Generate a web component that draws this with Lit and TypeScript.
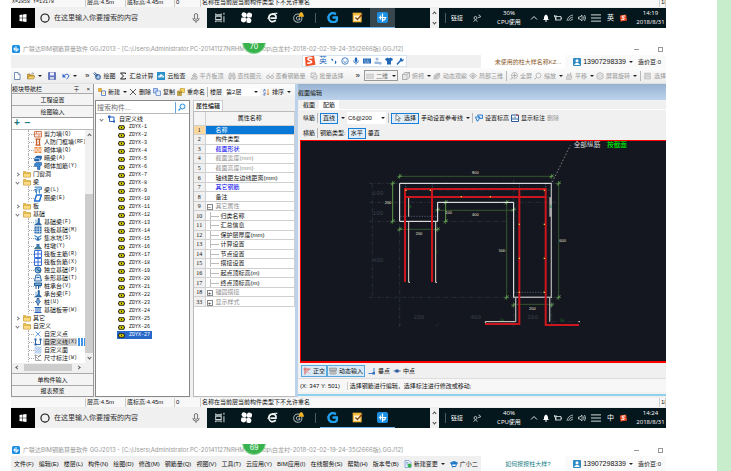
import { LitElement, html, css, svg, nothing } from "lit";
import { customElement, property } from "lit/decorators.js";
import { classMap } from "lit/directives/class-map.js";

const shapes: Record<string, unknown> = {
  app: svg`<rect width="16" height="16" rx="3" fill="#1b8fe3"/><path d="M8 2v12M2.500 8h11M5 5v6M8 11q4 2 4-3" fill="none" stroke="#fff" stroke-width="1.800"/>`,
  page: svg`<path d="M3 1h7l4 4v10H3z" fill="#fff" stroke="#4a6b9b" stroke-width="1.500"/><path d="M10 1v4h4" fill="none" stroke="#4a6b9b"/>`,
  open: svg`<path d="M1 14V4h5l1 2h6v3" fill="#d7a53d" stroke="#8e6a1c"/><path d="M1 14l3-6h12l-3 6z" fill="#f7cf6b" stroke="#8e6a1c"/><path d="M9 3q3-3 5 1" fill="none" stroke="#333"/>`,
  save: svg`<path d="M1 1h14v14H1z" fill="#5b74c4" stroke="#2d3f86"/><path d="M4 1h8v6H4z" fill="#eef"/><path d="M4 10h8v5H4z" fill="#cdd3ea"/>`,
  undo: svg`<path d="M4 7q7-6 10 0 0 4-5 7" fill="none" stroke="#3564c8" stroke-width="2"/><path d="M1 3v8h7z" fill="#3564c8"/>`,
  draw: svg`<circle cx="10" cy="10" r="5" fill="#8fb3dd" stroke="#24508c" stroke-width="1.500"/><path d="M1 3l8 7M3 1l7 6" stroke="#24508c" stroke-width="2"/><circle cx="10" cy="10" r="1.500" fill="#fff"/>`,
  sum: svg`<path d="M13 4V2H3l6 6-6 6h10v-2" fill="none" stroke="#222" stroke-width="2"/>`,
  cloud: svg`<rect width="16" height="16" fill="#2b8fc9"/><path d="M3 11q-2-4 2-4 3-5 7 0 4 1 1 4z" fill="#fff"/><path d="M6 9l2 2 4-4" stroke="#2b8fc9" fill="none" stroke-width="1.500"/>`,
  align: svg`<path d="M2 14h12V9H7zM5 8l4-6 4 4z" fill="#ddd" stroke="#aaa" stroke-width="1.500"/>`,
  find: svg`<path d="M2 14V7l2-5h2v12zM14 14V7l-2-5h-2v12zM6 7h4" fill="#e2e2e2" stroke="#aaa" stroke-width="1.500"/>`,
  glasses: svg`<circle cx="4" cy="10" r="3" fill="none" stroke="#aaa" stroke-width="1.500"/><circle cx="12" cy="10" r="3" fill="none" stroke="#aaa" stroke-width="1.500"/><path d="M7 10h2M13 7l2-5M4 7l3-4" stroke="#aaa" fill="none"/>`,
  batch: svg`<path d="M2 2h9v9H2z" fill="#eee" stroke="#aaa" stroke-width="1.500"/><path d="M6 6h8v8H6zM6 9h8M6 12h8" fill="#f6f6f6" stroke="#aaa"/>`,
  flat: svg`<path d="M1 4h14v9H1z" fill="#d8d8d8" stroke="#bbb"/>`,
  cube: svg`<path d="M1 5l5-4h9v9l-5 5H1z" fill="#e6e6e6" stroke="#999" stroke-width="1.500"/><path d="M1 5h9v10M10 5l5-4" fill="none" stroke="#999"/>`,
  orbit: svg`<path d="M3 6l6-4 5 3-2 7-6 3-4-3z" fill="#d0d0d0" stroke="#aaa"/><path d="M1 14L14 2" stroke="#999" stroke-width="1.500"/>`,
  local: svg`<path d="M8 2l7 5-7 7-7-7z" fill="#e8e8e8" stroke="#aaa" stroke-width="1.500"/><circle cx="8" cy="8" r="3" fill="#bbb"/>`,
  full: svg`<circle cx="9" cy="7" r="6" fill="none" stroke="#aaa" stroke-width="1.500"/><path d="M9 3v8M5 7h8M1 15l4-4" stroke="#999" stroke-width="1.500"/>`,
  lens: svg`<circle cx="9" cy="7" r="5" fill="#f4f4f4" stroke="#aaa" stroke-width="1.500"/><path d="M1 15l4-4" stroke="#aaa" stroke-width="2"/>`,
  pan: svg`<path d="M3 15V9l2-1V4h2v3h3V2h2v6h2l-2 7z" fill="#d5d5d5" stroke="#aaa"/>`,
  spin: svg`<path d="M8 1l6 3v8l-6 3-6-3V4z" fill="#f0f0f0" stroke="#aaa" stroke-width="1.500"/><circle cx="8" cy="8" r="3" fill="none" stroke="#aaa"/>`,
  pick: svg`<path d="M3 2h10v4H3zM3 8h10v6H3zM1 1v14" fill="#ddd" stroke="#aaa"/>`,
  newItem: svg`<path d="M7 6h8v9H7z" fill="#fff" stroke="#3666b8" stroke-width="1.500"/><path d="M1 1h6v6H1z" fill="#f0b82e" stroke="#b07a10"/><path d="M9 9h4v3H9z" fill="#ffd968"/>`,
  cross: svg`<path d="M2 2l12 12M14 2L2 14" stroke="#444" stroke-width="1.800"/>`,
  copy: svg`<path d="M1 1h8v9H1z" fill="#bcd2f2" stroke="#3666b8" stroke-width="1.200"/><path d="M6 6h9v9H6z" fill="#e4eefc" stroke="#3666b8" stroke-width="1.200"/>`,
  rename: svg`<path d="M6 1h9v8H6z" fill="#f6d25c" stroke="#a8851d"/><path d="M1 6h8v9H1z" fill="#e8b93a" stroke="#8e6a1c"/><path d="M3 9h4M3 12h4" stroke="#455" stroke-width="1.500"/>`,
  sort: svg`<path d="M3 7l2-5 2 5M3 10h4l-4 4h4" fill="none" stroke="#3666b8" stroke-width="1.500"/><path d="M12 2v11M10 11l2 3 2-3" fill="none" stroke="#d07a20" stroke-width="1.500"/>`,
  wall: svg`<path d="M1 3h14v11H1z" fill="#fbe7dd" stroke="#c55a28" stroke-width="1.500"/><path d="M1 8h14M5 3v5M10 8v6" stroke="#c55a28"/>`,
  door: svg`<path d="M3 2h10M3 14h10M5 2v12M11 2v12" stroke="#c05a20" stroke-width="2.500"/><path d="M5 8h6" stroke="#e0a080" stroke-width="2"/>`,
  brick: svg`<path d="M1 2h14v12H1z" fill="#f4883e"/><path d="M1 6h14M1 10h14M8 2v4M4 6v4M12 6v4M8 10v4" stroke="#fff" stroke-width="1.500"/>`,
  beam: svg`<path d="M1 9l4-5h10v5l-4 5H1z" fill="#2b6cb8" stroke="#17457e"/><path d="M1 9h10v5" fill="none" stroke="#fff"/>`,
  tee: svg`<path d="M1 4l3-3h11v5l-3 3v6H7V9H1z" fill="#3a86cc" stroke="#17458e"/>`,
  ring: svg`<path d="M5 2h10l-4 12H1z" fill="none" stroke="#1f6fd0" stroke-width="3"/>`,
  pipe: svg`<path d="M1 2h14v5h-4v8M5 15V7H1z" fill="#9cc8ee" stroke="#2c6fae" stroke-width="1.500"/>`,
  foot: svg`<path d="M8 1h3v8l4 5H1l7-5z" fill="#2e74b5" stroke="#184a80"/><path d="M4 3v8" stroke="#6fa7dc" stroke-width="2"/>`,
  raft: svg`<path d="M1 1h14v14H1z" fill="#2f6fb0"/><path d="M1 6h14M1 11h14M6 1v14M11 1v14" stroke="#dbe9f8" stroke-width="1.300"/>`,
  sump: svg`<path d="M1 3l7 4 7-4M2 8q6 9 12 0" fill="none" stroke="#3a86cc" stroke-width="2.500"/><circle cx="8" cy="10" r="2" fill="#17458e"/>`,
  pier: svg`<path d="M1 14l3-4h8l3 4z" fill="#49a" stroke="#234"/><path d="M5 4h6v6H5z" fill="#3d77b0"/>`,
  mesh: svg`<path d="M1 1h14v14H1z" fill="#fff" stroke="#2560d8" stroke-width="1.800"/><path d="M8 1v14M1 8h14" stroke="#2560d8" stroke-width="1.800"/>`,
  solo: svg`<circle cx="8" cy="8" r="6" fill="#8dbbe2" stroke="#1d5a96" stroke-width="1.800"/><path d="M2 3l11 10M8 2v7h6" stroke="#1d5a96" stroke-width="1.500" fill="none"/>`,
  strip: svg`<path d="M4 2h8l3 12H1zM5 7h6" fill="#dbe9f8" stroke="#2d6ca8" stroke-width="2"/>`,
  cap: svg`<path d="M1 2h14v5H1zM4 7v7M9 7v7M12 7v4" fill="#74a9da" stroke="#1d5a96" stroke-width="2"/>`,
  pile: svg`<path d="M6 1h4v4l3 2-3 3-2 5-2-5-3-3 3-2z" fill="#74a9da" stroke="#1d4f86" stroke-width="1.500"/>`,
  band: svg`<path d="M1 3h14M1 13h14M4 3v10M8 3v10M12 3v10" stroke="#2560b8" stroke-width="2"/>`,
  dot: svg`<path d="M3 3l10 10M13 3L3 13" stroke="#3a7fd0" stroke-width="1.500"/>`,
  line: svg`<path d="M3 3v10h10V3" fill="none" stroke="#1f5fa8" stroke-width="1.800"/><path d="M1 1h4v4H1zM11 1h4v4h-4zM1 11h4v4H1z" fill="#1f5fa8"/>`,
  area: svg`<path d="M1 1h14v14H1z" fill="#cfe0f6"/><path d="M1 5L5 1M1 10l9-9M1 15L15 1M6 15l9-9M11 15l4-4" stroke="#86aee0"/>`,
  dim: svg`<path d="M3 1v12h12M3 5l8 8M1 3h6" fill="none" stroke="#888" stroke-width="1.500"/><path d="M8 6l6-4" stroke="#555" stroke-width="2"/>`,
  folder: svg`<path d="M1 14V3h5l2 2h7v9z" fill="#f1c04f" stroke="#b98b22"/><path d="M1 14V7h14v7z" fill="#fbdc82" stroke="#c79a34"/>`,
  part: svg`<path d="M3 4h10l2 4-2 4H3L1 8z" fill="#f0e400" stroke="#222" stroke-width="2.500"/><circle cx="8" cy="8" r="1.500" fill="#222"/>`,
  poly: svg`<path d="M4 13V4h9v9z" fill="#fff" stroke="#2b66c4" stroke-width="2"/><path d="M1 1h5v5H1zM11 11h4v4h-4z" fill="#2b66c4"/>`,
  search: svg`<circle cx="9" cy="7" r="5" fill="#e6f4ff" stroke="#2c8fdc" stroke-width="2"/><path d="M1 15l4-4" stroke="#2c8fdc" stroke-width="2.500"/>`,
  cursor: svg`<path d="M4 1v12l3-3 2 5 2-1-2-5h4z" fill="#fff" stroke="#555" stroke-width="1.300"/>`,
  level: svg`<path d="M5 2h10v7H9zM1 6h9L6 14H4z" fill="#d8e9fb" stroke="#2277c8" stroke-width="1.800"/>`,
  note: svg`<path d="M1 2h14v13H1z" fill="#fff" stroke="#2a5c9a" stroke-width="2"/><path d="M4 12V7M8 12V5M12 12V8" stroke="#2a5c9a" stroke-width="2"/><path d="M10 1l5 3" stroke="#c33" stroke-width="2"/>`,
  ortho: svg`<path d="M4 1v14M1 4h14" stroke="#e06a62" stroke-width="2.500"/><path d="M7 7l6 6M7 12V7h5" fill="none" stroke="#e9958f" stroke-width="1.500"/>`,
  keys: svg`<path d="M1 2h14v5H1z" fill="#bbb" stroke="#777"/><path d="M2 9h12v5H2zM6 9v5M10 9v5" fill="#ddd" stroke="#777"/>`,
  perp: svg`<path d="M1 13h13M12 2v11" stroke="#2a72c8" stroke-width="1.800"/><path d="M9 10h5v5H9z" fill="#2a72c8"/>`,
  mid: svg`<path d="M1 8h14" stroke="#27569a" stroke-width="1.800"/><path d="M5 5h6v6H5z" fill="#27569a"/>`,
  user: svg`<rect width="16" height="16" rx="2" fill="#2f8ac2"/><circle cx="8" cy="5.500" r="3" fill="#fff"/><path d="M2 14q6-9 12 0z" fill="#fff"/>`,
  change: svg`<path d="M2 1h8l4 4v10H2z" fill="#eaf3ff" stroke="#3666b8"/><path d="M4 5h5M4 8h4" stroke="#3666b8"/><circle cx="11" cy="11" r="4" fill="#35b24a"/>`,
  helper: svg`<circle cx="8" cy="8" r="6" fill="#2f8fdc"/><path d="M0 6h16M4 14l8-2" stroke="#1565b0" stroke-width="2"/><path d="M5 9h6v3H5z" fill="#fff"/>`,
  sogou: svg`<path d="M2 3L14 1l2 12L3 15z" fill="#f0512b"/><path d="M12 4Q5 3 6 6q1 1 4 2 3 3-5 3" fill="none" stroke="#fff" stroke-width="2"/>`,
  punct: svg`<path d="M3 4l3 3M10 8q3 2 0 5" stroke="#2168b8" stroke-width="2.500" fill="none"/>`,
  smile: svg`<circle cx="8" cy="8" r="6.500" fill="none" stroke="#2168b8" stroke-width="1.600"/><path d="M5 6h1M10 6h1M5 9q3 4 6 0" fill="none" stroke="#2168b8" stroke-width="1.600"/>`,
  mic: svg`<rect x="5.500" y="1" width="5" height="9" rx="2.500" fill="#2168b8"/><path d="M3 7q0 5 5 5t5-5M8 12v3" fill="none" stroke="#2168b8" stroke-width="1.500"/>`,
  board: svg`<path d="M0 3h16v10H0z" fill="#2168b8"/><path d="M2 6h12M2 8.500h12M4 11h8" stroke="#fff" stroke-dasharray="2 1"/>`,
  people: svg`<circle cx="6" cy="4" r="3" fill="#9db8dd"/><path d="M1 14V9h9v5zM10 10h5v5h-5z" fill="#9db8dd"/>`,
  shirt: svg`<path d="M5 1q3 3 6 0l5 3-2 4-2-1v8H4V7L2 8 0 4z" fill="#2168b8"/>`,
  wrench: svg`<path d="M2 15L10 6" stroke="#2168b8" stroke-width="3"/><path d="M9 2q4 0 3 3 3 1 3-2 2 7-5 6-4-3-1-7" fill="#2168b8"/>`,
  windows: svg`<path d="M1 2l6-1v6.500H1zM8 1l7-1v7.500H8zM1 8.500h6V15l-6-1zM8 8.500h7V16l-7-1z" fill="#fff"/>`,
  cortana: svg`<circle cx="8" cy="8" r="6.500" fill="none" stroke="#111" stroke-width="1.800"/>`,
  micLine: svg`<rect x="5.500" y="1" width="5" height="9" rx="2" fill="none" stroke="#555" stroke-width="1.300"/><path d="M3 8q0 5 5 5t5-5M8 13v3" fill="none" stroke="#555" stroke-width="1.300"/>`,
  tasks: svg`<path d="M1 2v2h8V2M1 6h8v5H1zM1 15v-2h8v2M13 1v3M13 6v9" fill="none" stroke="#ccd5d8" stroke-width="1.500"/>`,
  fan: svg`<path d="M8 8Q0 8 1 3t7-1zM8 8Q8 0 13 1t2 7zM8 8q8 0 7 5t-7 2zM8 8q0 8-5 7t-2-7z" fill="#fff"/><circle cx="8" cy="8" r="1.500" fill="#04171c"/>`,
  edge: svg`<path d="M13 12q-8 5-10-2-1-7 5-7 6 0 5 6H5" fill="none" stroke="#f2f5f6" stroke-width="2.500"/><path d="M1 10Q5 0 15 2" fill="none" stroke="#f2f5f6" stroke-width="1.500"/>`,
  guard: svg`<circle cx="7" cy="9" r="6" fill="none" stroke="#a9b3b6" stroke-width="1.500"/><path d="M10 7q-5-2-5 2t5 2V9H8" fill="none" stroke="#c8cfd1" stroke-width="1.300"/><path d="M8 7q1-6 4-7 3 1 4 7z" fill="#f0b429"/>`,
  gee: svg`<path d="M13 3Q5-1 2 7q0 8 8 8 5-1 5-7H8" fill="none" stroke="#22a0f0" stroke-width="3.500"/>`,
  pad: svg`<path d="M1 1h13v14H1z" fill="#f6b93c"/><path d="M3 5h9v8H3z" fill="#fff3d0"/><path d="M5 8l3 3 7-8" fill="none" stroke="#8a4b18" stroke-width="2"/>`,
  pen: svg`<circle cx="5" cy="8" r="3" fill="none" stroke="#dfe6e8" stroke-width="1.500"/><path d="M1 15q4-6 8 0M10 7l5-1M11 2q4 0 4 4" fill="none" stroke="#dfe6e8" stroke-width="1.500"/>`,
  up: svg`<path d="M2 11l6-6 6 6" fill="none" stroke="#eef2f3" stroke-width="1.800"/>`,
  bell: svg`<path d="M2 12q3-2 2-6 1-4 4-5 3 1 4 5-1 4 2 6zM6 13h4v2H6z" fill="#fff"/>`,
  plug: svg`<path d="M4 5h10v7H4zM15 7v3M1 2v4h3V2M3 6v7" fill="none" stroke="#e4eaec" stroke-width="1.600"/>`,
  wifi: svg`<path d="M2 14Q3 4 14 2M5 14q1-7 9-8M9 14q0-3 5-4" fill="none" stroke="#cbd4d6" stroke-width="1.500"/>`,
  sound: svg`<path d="M1 6h3l4-4v12l-4-4H1z" fill="none" stroke="#e4eaec" stroke-width="1.500"/><path d="M11 5q2 3 0 6M13 2q4 6 0 12" fill="none" stroke="#e4eaec" stroke-width="1.500"/>`,
  bars: svg`<path d="M0 3h16M0 8h16M0 13h16" stroke="#dfe6e8" stroke-width="1.500"/>`,
};

const ic = (name: string, cls = "") =>
  html`<svg class="ic ${cls}" viewBox="0 0 16 16" aria-hidden="true">${shapes[name]}</svg>`;

const arrow = html`<span class="arrow"></span>`;

const base = css`
  * { box-sizing: border-box; }
  :host { display: block; font: 6px/8px "Liberation Sans", "Noto Sans CJK SC", sans-serif; color: #111; white-space: nowrap; }
  button, input, select { font: inherit; color: inherit; margin: 0; padding: 0; border: 0; background: none; border-radius: 0; appearance: none; outline: 0; min-width: 0; }
  button { display: flex; align-items: center; gap: 2px; flex: none; white-space: nowrap; }
  a { color: inherit; text-decoration: none; }
  .ic { width: 8px; height: 8px; flex: none; display: block; }
  .arrow { border: 2px solid transparent; border-top-color: #222; border-bottom: 0; margin-left: 1px; flex: none; }
  .sep { width: 1px; height: 10px; background: #b8b8b8; flex: none; }
  .grow { flex: 1; }
  .mono { font: 5px/8px "Liberation Mono", "Noto Sans CJK SC", monospace; }
`;

@customElement("task-bar")
class TaskBar extends LitElement {
  @property() load = "";
  @property() time = "";
  @property() ime = "";
  @property({ type: Boolean }) active = false;
  static styles = [base, css`
    :host { display: flex; height: 20px; background: #04171c; color: #fff; font-family: "Open Sans", "Noto Sans CJK SC", sans-serif; overflow: hidden; flex: none; }
    .start { width: 24px; background: #000; justify-content: center; }
    .find { width: 172px; background: #f0f0f0; display: flex; align-items: center; padding: 0 6px 0 5px; gap: 4px; flex: none; }
    .find .ic { width: 10px; height: 10px; }
    .find input { flex: 1; font-size: 7px; color: #333; }
    .find input::placeholder { color: #333; opacity: 1; }
    .slot { width: 26px; justify-content: center; border-bottom: 1px solid transparent; }
    .slot .ic { width: 11px; height: 11px; }
    .run { width: 25px; border-bottom-color: #76b9ed; }
    .on { background: #38474d; }
    .bar { align-self: center; background: #4d5b60; margin: 0 4px; }
    .scroll { width: 9px; background: #f0f0f0; color: #333; display: flex; flex-direction: column; justify-content: space-between; align-items: center; padding: 4px 0; margin-right: 2px; flex: none; }
    .scroll i { width: 3px; height: 3px; border: solid #444; border-width: 1px 0 0 1px; rotate: 45deg; }
    .scroll i + i { rotate: 225deg; }
    .links { padding: 0 10px 0 1px; }
    .pen { align-self: center; }
    .cpu, .clock { text-align: center; line-height: 9px; flex: none; align-self: center; }
    .cpu { width: 32px; margin: 0 5px 0 12px; }
    .clock { width: 31px; }
    .tray { display: flex; align-items: center; gap: 4px; margin-right: 8px; flex: none; }
    .tray .wide { width: 12px; height: 10px; }
    .tray b { font-weight: 400; font-size: 7px; width: 9px; text-align: center; }
  `];
  render() {
    return html`
      <button class="start" aria-label="开始">${ic("windows")}</button>
      <label class="find">${ic("cortana")}<input aria-label="搜索" placeholder="在这里输入你要搜索的内容" />${ic("micLine")}</label>
      ${["tasks", "fan", "edge", "guard"].map((n) => html`<button class="slot" aria-label=${n}>${ic(n)}</button>`)}
      <span class="sep bar"></span>
      ${["gee", "pad", "app"].map((n, i) => html`<button class=${classMap({ slot: true, run: true, on: this.active && i === 2 })} aria-label=${n}>${ic(n)}</button>`)}
      <span class="grow"></span>
      <span class="scroll"><i></i><i></i></span>
      <span class="sep bar"></span>
      <button class="links">链接</button>${ic("pen", "pen")}
      <span class="cpu">${this.load}<br />CPU使用</span>
      <span class="tray">${["up", "bell", "plug", "wifi", "sound"].map((n) => ic(n))}${ic("bars", "wide")}<b>${this.ime}</b>${ic("sogou")}</span>
      <span class="clock">${this.time}<br />2018/8/31</span>`;
  }
}

@customElement("status-line")
class StatusLine extends LitElement {
  @property() coords = "";
  static styles = [base, css`
    :host { display: flex; height: 11px; background: #f0f0f0; overflow: hidden; align-items: stretch; padding: 1px 0; flex: none; }
    span { border-right: 1px solid #ccc; background: #f8f8f8; padding: 0 1px; line-height: 9px; flex: none; }
    .c { width: 75px; }
    .h { width: 40px; }
    .b { width: 49px; }
    .z { width: 26px; }
    .m { flex: 1; min-width: 0; }
    .e { width: 6px; overflow: hidden; }
  `];
  render() {
    return html`<span class="c mono">${this.coords}</span><span class="h">层高:4.5m</span><span class="b">底标高:4.45m</span><span class="z">0</span><span class="m">名称在当前层当前构件类型下不允许重名</span><span class="e">18</span>`;
  }
}

@customElement("title-strip")
class TitleStrip extends LitElement {
  @property() badge = "";
  static styles = [base, css`
    :host { display: flex; align-items: center; height: 12px; position: relative; overflow: hidden; padding: 0 3px 0 1px; gap: 3px; color: #999; font-family: "Inter", "Noto Sans CJK SC", sans-serif; flex: none; }
    .badge { position: absolute; left: 231px; top: -13px; width: 24px; height: 24px; border-radius: 50%; background: #37b24d; border: 1px solid #8fd79b; color: #fff; text-align: center; font-size: 7px; line-height: 32px; }
    .min { width: 5px; height: 1px; background: #999; margin-right: 16px; }
    .max { width: 5px; height: 5px; border: 1px solid #999; }
  `];
  render() {
    return html`${ic("app")}<span>广联达BIM钢筋算量软件 GGJ2013 - [C:\\Users\\Administrator.PC-20141127NRHM\\Desktop\\白龙村-2018-02-02-19-24-35(2666版).GGJ12]</span><span class="badge">${this.badge}</span><span class="grow"></span><button class="min" aria-label="最小化"></button><button class="max" aria-label="还原"></button>`;
  }
}

type Node = [kind: "leaf" | "open" | "shut", text: string, icon?: string, key?: string];
const nav: Node[] = [
  ["leaf", "剪力墙", "wall", "(Q)"], ["leaf", "人防门框墙", "door", "(RF)"], ["leaf", "砌体墙", "brick", "(Q)"],
  ["leaf", "暗梁", "beam", "(A)"], ["leaf", "砌体加筋", "tee", "(Y)"], ["shut", "门窗洞"], ["open", "梁"],
  ["leaf", "梁", "pipe", "(L)"], ["leaf", "圈梁", "ring", "(E)"], ["shut", "板"], ["open", "基础"],
  ["leaf", "基础梁", "foot", "(F)"], ["leaf", "筏板基础", "raft", "(M)"], ["leaf", "集水坑", "sump", "(S)"],
  ["leaf", "柱墩", "pier", "(Y)"], ["leaf", "筏板主筋", "mesh", "(R)"], ["leaf", "筏板负筋", "mesh", "(X)"],
  ["leaf", "独立基础", "solo", "(P)"], ["leaf", "条形基础", "strip", "(T)"], ["leaf", "桩承台", "cap", "(V)"],
  ["leaf", "承台梁", "foot", "(F)"], ["leaf", "桩", "pile", "(U)"], ["leaf", "基础板带", "band", "(W)"],
  ["shut", "其它"], ["open", "自定义"], ["leaf", "自定义点", "dot"], ["leaf", "自定义线", "line", "(X)"],
  ["leaf", "自定义面", "area"], ["leaf", "尺寸标注", "dim", "(W)"],
];

const props: [no: number, name: string, tone?: string, kind?: string][] = [
  [1, "名称", "sel"], [2, "构件类型"], [3, "截面形状", "blue"], [4, "截面宽度(mm)", "gray"], [5, "截面高度(mm)", "gray"],
  [6, "轴线距左边线距离(mm)"], [7, "其它钢筋", "blue"], [8, "备注"], [9, "其它属性", "gray", "−"],
  [10, "归类名称", "", "child"], [11, "汇总信息", "", "child"], [12, "保护层厚度(mm)", "", "child"], [13, "计算设置", "", "child"],
  [14, "节点设置", "", "child"], [15, "搭接设置", "", "child"], [16, "起点顶标高(m)", "", "child"], [17, "终点顶标高(m)", "", "child"],
  [18, "锚固搭接", "gray", "+"], [33, "显示样式", "gray", "+"],
];

const tick = (x: number, y: number) => svg`<path class="tick" d="M${x - 6} ${y + 6}l12-12M${x - 7} ${y}h14M${x} ${y - 7}v14"/>`;

@customElement("section-view")
class SectionView extends LitElement {
  static styles = css`
    :host { display: block; height: 223px; background: #14171f; border: 1px solid #f00; border-width: 1px 0 2px 1px; overflow: hidden; }
    svg { display: block; width: 365px; height: 220px; }
    path { fill: none; }
    .axis { stroke: #343944; stroke-width: 2; stroke-dasharray: 12 5 3 5; }
    .dots { stroke: #64748a; stroke-width: 2; stroke-dasharray: 4 4; }
    .lead { stroke: #aaa; stroke-width: 2; stroke-dasharray: 5 5; }
    .edge { stroke: #fff; stroke-width: 3; }
    .soft { stroke: #aaa; stroke-width: 4; }
    .hook { stroke: #e4e0d6; stroke-width: 3; }
    .dim { stroke: #35552f; stroke-width: 3; }
    .lit { stroke: #5c9a4a; }
    .tick { stroke: #68a856; stroke-width: 2; }
    .bar { stroke: #cc161d; stroke-width: 6; }
    text { font: 12px "Liberation Sans", "Noto Sans CJK SC", sans-serif; fill: #e6e0d4; text-anchor: middle; }
    .ghost { font: 18px "Liberation Mono", monospace; fill: #3a3f49; }
    .tip { font-size: 20px; fill: #ddd; }
    .go { fill: #0f0; }
    .mark { font-size: 12px; fill: #187d24; }
    .pt { fill: #d9c73a; }
  `;
  render() {
    const t = (x: number, y: number, s: string, c = "") => svg`<text class=${c} x=${x} y=${y}>${s}</text>`;
    return html`<svg viewBox="18 3 1095 660" preserveAspectRatio="xMinYMin meet" role="img" aria-label="截面配筋图">
      <path class="axis" d="M222 130H790M222 187H790M222 244H640M222 472H790M232 130V472M314 250V560M656 120V560M770 120V560M426 250V270M330 150H770M330 172H770"/>
      <path class="dots" d="M316 229H428M656 457H750M332 130v16M412 130v16M673 130v16M752 130v16"/>
      <path class="lead" d="M772 126L826 16"/>
      <path class="dim" d="M314 109H770M428 211H656M314 268H428M656 493H770M635 187V472M791 130V472"/>
      <path class="dim lit" d="M293 130V244M452 187V244"/>
      ${[[314, 109], [770, 109], [293, 130], [293, 244], [428, 209], [656, 209], [314, 268], [428, 268], [656, 495], [770, 495], [635, 187], [635, 472], [791, 130], [791, 472], [452, 187], [452, 244]].map(([x, y]) => tick(x, y))}
      <path class="edge" d="M770 130H314V244H428V187H656V472H770"/>
      <path class="soft" d="M769 130V472H656M765 172V230M764 474V545M662 474V545"/>
      <path class="hook" d="M341 172V230M341 246V427h4M422 246V427h4M662 545H571v4M850 545h5"/>
      <path class="axis" d="M770 545H850M310 560l8-8M422 560l8-8M652 560l8-8M766 560l8-8"/>
      <path class="bar" d="M330 426V147H752V555H852M411 147V426M330 171H752M673 147V552H570"/>
      <g>${[[333, 151], [406, 151], [499, 170], [586, 170], [673, 253], [748, 253], [673, 355], [748, 355], [673, 457], [748, 457], [748, 151]].map(([x, y]) => svg`<rect class="pt" x=${x - 2} y=${y - 2} width="4" height="4"/>`)}</g>
      ${t(541, 102, "800")}${t(279, 192, "200")}${t(461, 221, "100")}${t(541, 227, "400")}${t(372, 284, "200")}${t(621, 336, "500")}${t(803, 306, "600")}${t(712, 510, "200")}
      ${t(249, 166, "100", "ghost")}${t(249, 224, "100", "ghost")}${t(249, 366, "400", "ghost")}${t(372, 537, "200", "ghost")}${t(542, 537, "400", "ghost")}${t(713, 537, "200", "ghost")}
      ${t(345, 204, "B", "mark")}${t(766, 204, "B", "mark")}${t(344, 339, "1", "mark")}${t(425, 339, "1", "mark")}${t(621, 543, "1a", "mark")}${t(801, 543, "1a", "mark")}
      ${t(876, 20, "全部纵筋", "tip")}${t(966, 20, "按截面", "tip go")}
    </svg>`;
  }
}

@customElement("app-root")
class AppRoot extends LitElement {
  static styles = [base, css`
    :host { display: flex; height: 100vh; background: #fff; overflow: hidden; }
    .doc { flex: 1; min-width: 0; margin: 0 51px 0 11px; overflow: hidden; }
    .edge { width: 14px; background: #c8edcc; flex: none; }
    .shot { display: flex; flex-direction: column; margin-bottom: 15px; }
    .shot + .shot { margin-bottom: 16px; }
    .cut { height: 28px; justify-content: flex-end; overflow: hidden; }
    .menu { display: flex; align-items: center; height: 13px; background: #f0f0f0; flex: none; }
    .tall { height: 15px; }
    .menu nav { display: flex; gap: 5px; padding-left: 3px; flex: 1; align-items: center; }
    .hint { width: 84px; align-self: stretch; background: #fff; display: flex; align-items: center; justify-content: center; color: #8a5a2a; padding-left: 10px; }
    .teal { color: #207f86; }
    .acct { display: flex; align-items: center; justify-content: flex-end; gap: 2px; width: 101px; align-self: stretch; background: #fafafa; padding-right: 5px; }
    .acct .phone { font-size: 7px; }
    .acct .beans { margin-left: 3px; }
    .ime { align-self: stretch; display: flex; align-items: center; gap: 3px; background: #fff; border: 1px solid #d5e2f0; padding: 0 2px 0 0; margin: 0 74px 1px 0; color: #2168b8; font-size: 8px; height: 12px; }
    .ime .big { width: 13px; height: 12px; }
    .tools { display: flex; align-items: center; height: 16px; gap: 4px; padding-left: 2px; background: linear-gradient(#fcfcfc, #ececec); overflow: hidden; border-bottom: 1px solid #e0e0e0; flex: none; }
    .tools .file { display: flex; gap: 6px; width: 68px; align-items: center; flex: none; }
    .dim, .tools .dim { color: #999; }
    .mode { display: flex; align-items: center; border: 1px solid #999; height: 11px; padding: 0 1px; background: #f4f4f4; color: #777; gap: 2px; flex: none; }
    .mode select { width: 13px; }
    .more { font-size: 8px; }
    .view { display: flex; align-items: center; gap: 2px; flex: none; }
    .view .sep { margin: 0 1px; }
    .body { display: flex; height: 313px; background: #f0f0f0; flex: none; }
    .left { width: 83px; display: flex; flex-direction: column; flex: none; border: 1px solid #999; border-top: 0; }
    .cap { display: flex; height: 9px; align-items: center; gap: 7px; padding-right: 3px; }
    .cap .grow { overflow: hidden; }
    .fold { width: 100%; height: 12px; justify-content: center; background: #f4f4f4; border-top: 1px solid #aaa; }
    .left .last { height: 11px; }
    .signs { height: 12px; background: #fff; border-top: 1px solid #999; color: #177; font: bold 10px/10px "Liberation Sans", sans-serif; padding-left: 2px; display: flex; gap: 5px; flex: none; }
    .pane { display: flex; background: #fff; border-top: 1px solid #bbb; flex: 1; min-height: 0; }
    .tree { flex: 1; min-width: 0; overflow: hidden; list-style: none; margin: 0; padding: 0; }
    .tree li { display: flex; align-items: center; height: 8px; gap: 2px; padding-left: 4px; }
    .tree .leaf { margin-left: 16px; padding-left: 0; border-left: 1px dotted #aaa; }
    .leaf::before { content: ""; width: 5px; border-top: 1px dotted #aaa; margin-right: -2px; flex: none; }
    .tw { width: 3px; height: 3px; border: solid #777; border-width: 1px 1px 0 0; rotate: 45deg; margin-right: 2px; flex: none; }
    .open .tw { rotate: 135deg; }
    .hot { background: linear-gradient(#d4d4d4, #d4d4d4) 14px 0 / 34px 8px no-repeat, repeating-linear-gradient(90deg, #3f93e8 0 2px, #fff 2px 3px) 49px 0 / 12px 8px no-repeat; }
    .mono { margin-left: -2px; }
    .vbar { width: 8px; background: #f0f0f0; display: flex; flex-direction: column; align-items: center; padding: 4px 0; flex: none; }
    .vbar i, .hbar i { width: 3px; height: 3px; border: solid #555; border-width: 1px 0 0 1px; rotate: 45deg; }
    .vbar i + b + i { rotate: 225deg; }
    .vbar b { width: 8px; background: #cdcdcd; margin: 57px 0 3px; flex: 1; }
    .hbar { display: flex; height: 9px; align-items: center; padding: 0 13px 0 4px; background: #f0f0f0; gap: 5px; margin-bottom: 1px; flex: none; }
    .hbar i { rotate: -45deg; }
    .hbar b { flex: 1; height: 7px; background: #cdcdcd; }
    .hbar b + i { rotate: 135deg; }
    .midcol { width: 201px; display: flex; flex-direction: column; flex: none; }
    .bar2 { display: flex; align-items: center; height: 16px; gap: 2px; padding-left: 4px; background: linear-gradient(#fcfcfc, #efefef); flex: none; }
    .bar2 select { width: 27px; }
    .floor { display: flex; align-items: center; background: #fff; padding: 0 2px; width: 36px; }
    .cols { display: flex; flex: 1; min-height: 0; gap: 3px; }
    .list { width: 95px; display: flex; flex-direction: column; flex: none; background: #fff; border: 1px solid #888; margin-left: 1px; }
    .seek { display: flex; height: 13px; align-items: center; border-bottom: 1px solid #bbb; padding-right: 3px; }
    .seek input { flex: 1; color: #777; height: 11px; border-right: 1px solid #68a4dc; padding-left: 1px; margin-right: 2px; font-size: 7px; }
    .parts { list-style: none; margin: 0; padding: 0; overflow: hidden; font: 5px/8px "Liberation Mono", monospace; }
    .parts li { display: flex; align-items: center; height: 8px; gap: 4px; margin-left: 21px; width: 35px; padding-left: 1px; }
    .parts .ic { width: 7px; height: 7px; }
    .parts .root { margin-left: 3px; font: 6px/8px "Noto Sans CJK SC", sans-serif; width: 70px; gap: 2px; margin-top: 1px; }
    .parts .root .ic { width: 9px; height: 8px; margin-right: 1px; }
    .parts .pick { background: #2868c8; color: #fff; }
    .grid { flex: 1; min-width: 0; display: flex; flex-direction: column; }
    .tab { padding: 0 2px; background: #fff; height: 11px; align-self: flex-start; border: 1px solid #ccc; border-bottom: 0; font-weight: 500; }
    .sheet { background: #fff; flex: 1; border: 1px solid #bbb; border-width: 1px 0 1px 1px; }
    table { border-collapse: collapse; width: 100%; height: 195px; table-layout: fixed; }
    th, td { border: 1px solid #d0d0d0; border-width: 0 1px 1px 0; padding: 0; font-weight: 400; overflow: hidden; line-height: 8px; }
    .no { width: 11px; background: #f0f0f0; text-align: center; font-family: "Liberation Serif", serif; }
    .head th { background: #f4f4f4; height: 13px; }
    .nm { padding-left: 10px; }
    .sel .nm { background: #0a78d7; color: #fff; }
    .sel .no { background: #fbd7a0; }
    .blue .nm { color: #0000f0; }
    .gray .nm, .node { color: #909090; }
    .child .nm { padding-left: 4px; }
    .child .nm::before { content: ""; display: inline-block; width: 8px; height: 8px; border-left: 1px solid #bbb; background: linear-gradient(#bbb, #bbb) 0 4px / 8px 1px no-repeat; margin-right: 2px; vertical-align: top; }
    .node { padding-left: 1px; }
    .sq { display: inline-block; width: 6px; height: 6px; border: 1px solid #888; color: #222; line-height: 4px; text-align: center; margin-right: 3px; vertical-align: -1px; }
    .right { flex: 1; min-width: 0; display: flex; flex-direction: column; border-left: 3px solid #bcd2ea; background: #f0f0f0; }
    .rt { height: 16px; background: linear-gradient(#97b2d1, #bdd3ec); padding-top: 5px; flex: none; }
    .tabs { display: flex; height: 10px; margin-left: 1px; border-bottom: 1px solid #fff; align-items: stretch; flex: none; }
    .tabs button { padding: 0 4px; }
    .tabs .cur { background: #fff; }
    .r1 { display: flex; align-items: center; height: 16px; gap: 2px; padding-left: 5px; flex: none; }
    .r2 { height: 14px; gap: 2px; }
    .r1 .box { border: 1px solid #1a7fd6; background: #e0eefb; height: 11px; padding: 0 2px; }
    .r1 select { width: 32px; }
    .pickbox { display: flex; align-items: center; background: #fff; height: 12px; padding: 0 1px; width: 39px; }
    section-view { margin-left: 2px; flex: none; }
    .r3 { display: flex; align-items: center; height: 15px; padding-left: 3px; flex: none; }
    .r3 .box { border: 1px solid #5aa7dc; background: #d8eaf8; height: 12px; padding: 0 1px; }
    .r3 .pl { padding: 0 3px; }
    .info { display: flex; height: 14px; align-items: center; border-top: 1px solid #ddd; padding-left: 2px; background: #f7f7f7; flex: none; }
    .info .xy { width: 48px; border-right: 1px solid #ccc; }
    .rim { height: 2px; background: #8fd0ee; margin-top: auto; margin-bottom: 1px; }
  `];

  tool(icon: string, text: string, drop = false, dim = false) {
    return html`<button class=${dim ? "dim" : ""}>${ic(icon)}${text}${drop ? arrow : nothing}</button>`;
  }

  account() {
    return html`<div class="acct">${ic("user")}<span class="phone">13907298339</span>${arrow}<span class="beans">造价豆:0</span></div>`;
  }

  navPanel() {
    return html`<aside class="left">
      <div class="cap"><span class="grow">模块导航栏</span><span>∓</span><span>×</span></div>
      <button class="fold">工程设置</button>
      <button class="fold">绘图输入</button>
      <div class="signs"><span>+</span><span>−</span></div>
      <div class="pane">
        <ul class="tree">${nav.map(([kind, text, icon, key]) => html`<li class="${kind} ${icon === "line" ? "hot" : ""}">
          ${kind === "leaf" ? nothing : html`<span class="tw"></span>`}${ic(icon ?? "folder")}<span>${text}</span>${key ? html`<span class="mono">${key}</span>` : nothing}</li>`)}</ul>
        <div class="vbar"><i></i><b></b><i></i></div>
      </div>
      <div class="hbar"><i></i><b></b><i></i></div>
      <button class="fold">单构件输入</button>
      <button class="fold last">报表预览</button>
    </aside>`;
  }

  partPanel() {
    return html`<div class="midcol">
      <div class="bar2">${this.tool("newItem", "新建", true)}${this.tool("cross", "删除")}${this.tool("copy", "复制")}${this.tool("rename", "重命名")}<span class="sep"></span>
        <label for="floor">楼层</label><span class="floor"><select id="floor"><option>第2层</option></select>${arrow}</span>${this.tool("sort", "排序", true)}</div>
      <div class="cols">
        <div class="list">
          <label class="seek"><input aria-label="搜索构件" placeholder="搜索构件..." />${ic("search")}</label>
          <ul class="parts"><li class="root open"><span class="tw"></span>${ic("poly")}<span>自定义线</span></li>
            ${Array.from({ length: 27 }, (_, i) => html`<li class=${i === 26 ? "pick" : ""}>${ic("part")}<span>ZDYX-${i + 1}</span></li>`)}</ul>
        </div>
        <div class="grid">
          <button class="tab">属性编辑</button>
          <div class="sheet"><table>
            <thead><tr class="head"><th class="no"></th><th>属性名称</th></tr></thead>
            <tbody>${props.map(([no, name, tone = "", kind = ""]) => html`<tr class="${tone} ${kind === "child" ? "child" : ""}"><td class="no">${no}</td>
              <td class=${kind && kind !== "child" ? "node" : "nm"}>${kind && kind !== "child" ? html`<span class="sq">${kind}</span>` : nothing}${name}</td></tr>`)}</tbody>
          </table></div>
        </div>
      </div>
    </div>`;
  }

  editor() {
    return html`<section class="right">
      <div class="rt"><span>截面编辑</span></div>
      <div class="tabs"><button>截面</button><button class="cur">配筋</button></div>
      <div class="r1"><span>纵筋</span><span class="sep"></span><button class="box">直线</button>${arrow}
        <span class="pickbox"><select aria-label="钢筋信息"><option>C6@200</option></select>${arrow}</span><span class="sep"></span>
        <button class="box">${ic("cursor")}选择</button><button>手动设置参考线 ${arrow}</button><span class="sep"></span>
        ${this.tool("level", "设置标高")}${this.tool("note", "显示标注")}<button class="dim">删除</button></div>
      <div class="r1 r2"><span>横筋</span><span class="sep"></span><span>钢筋类型:</span><button class="box">水平</button><button>垂直</button></div>
      <section-view></section-view>
      <div class="r3"><button class="box">${ic("ortho")}正交</button><button class="box">${ic("keys")}动态输入</button><button class="pl">${ic("perp")}垂点</button><button>${ic("mid")}中点</button></div>
      <div class="info"><span class="xy">(X: 347 Y: 501)</span><span>&nbsp;选择钢筋进行编辑，选择标注进行修改或移动;</span></div>
      <div class="rim"></div>
    </section>`;
  }

  render() {
    return html`<main class="doc">
      <div class="shot cut"><status-line coords="X=2858 Y=13178"></status-line><task-bar load="30%" time="14:19" ime="英" active></task-bar></div>
      <div class="shot">
        <title-strip badge="70"></title-strip>
        <div class="menu"><span class="grow"></span>
          <div class="ime">${ic("sogou", "big")}<span>英</span>${["punct", "smile", "mic", "board", "people", "shirt", "wrench"].map((n) => ic(n))}</div>
          <a class="hint" href="#">未使用的柱大样名称KZ...</a>${this.account()}</div>
        <div class="tools">
          <div class="file">${ic("page")}<button>${ic("open")}${arrow}</button>${ic("save")}<button>${ic("undo")}${arrow}</button></div><span class="more">»</span>
          ${this.tool("draw", "绘图")}${this.tool("sum", "汇总计算")}${this.tool("cloud", "云检查")}${this.tool("align", "平齐板顶", false, true)}${this.tool("find", "查找图元", false, true)}${this.tool("glasses", "查看钢筋量", false, true)}${this.tool("batch", "批量选择", false, true)}
          <span class="grow"></span><span class="more">»</span>
          <span class="mode">${ic("flat")}<select aria-label="视图模式"><option>二维</option></select>${arrow}</span>
          <div class="view">${this.tool("cube", "俯视", true, true)}${this.tool("orbit", "动态观察", false, true)}${this.tool("local", "局部三维", false, true)}<span class="sep"></span>${this.tool("full", "全屏", false, true)}${this.tool("lens", "缩放", true, true)}${this.tool("pan", "平移", true, true)}${this.tool("spin", "屏幕旋转", true, true)}<span class="sep"></span>${this.tool("pick", "选择", false, true)}</div>
        </div>
        <div class="body">${this.navPanel()}${this.partPanel()}${this.editor()}</div>
        <status-line></status-line>
        <task-bar load="40%" time="14:24" ime="中"></task-bar>
      </div>
      <div class="shot">
        <title-strip badge="69"></title-strip>
        <div class="menu tall"><nav>${["文件(F)", "编辑(E)", "楼层(L)", "构件(N)", "绘图(D)", "修改(M)", "钢筋量(Q)", "视图(V)", "工具(T)", "云应用(Y)", "BIM应用(I)", "在线服务(S)", "帮助(H)", "版本号(B)"].map((m) => html`<button>${m}</button>`)}${this.tool("change", "新建变更", true)}${this.tool("helper", "广小二")}</nav>
          <a class="hint teal" href="#">如何按按柱大样?</a>${this.account()}</div>
      </div>
    </main>
    <div class="edge"></div>`;
  }
}
